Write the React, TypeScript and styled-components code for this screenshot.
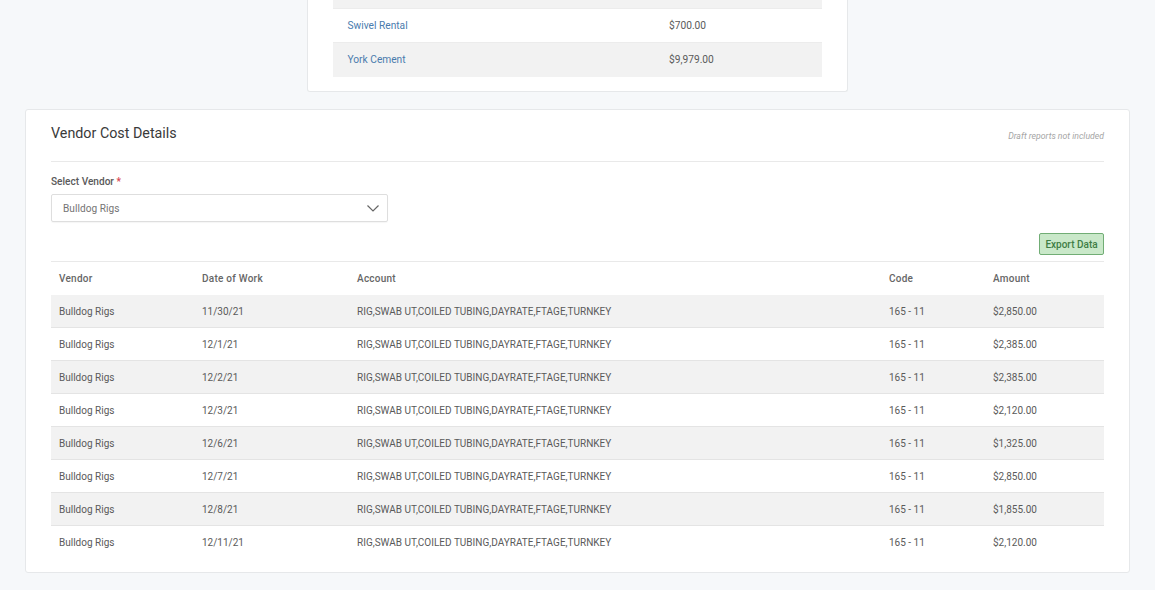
import { createGlobalStyle } from "styled-components";
import styled from "styled-components";

const GlobalStyle = createGlobalStyle`
  html, body {
    margin: 0;
    padding: 0;
    height: 590px;
    overflow: hidden;
    background-color: #f6f8fa;
    font-family: Roboto, "Liberation Sans", sans-serif;
  }
  * { box-sizing: border-box; }
`;

const Page = styled.div`
  width: 1155px;
  height: 590px;
  padding: 0 25px;
  background-color: #f6f8fa;
`;

const SummaryCard = styled.section`
  width: 541px;
  height: 92px;
  margin: 0 0 17px 282px;
  padding: 0 25px 15px;
  background-color: #fff;
  border: 1px solid #e6e8ea;
  border-top: 0;
  border-radius: 0 0 3px 3px;
`;

const SummaryRow = styled.div<{ $shaded?: boolean; $height?: number }>`
  display: grid;
  grid-template-columns: 321.5px 1fr;
  align-items: center;
  height: ${p => p.$height ?? 34}px;
  padding: 0 0 1px 14.5px;
  font-size: 10.2px;
  color: #5a5a5a;
  background-color: ${p => (p.$shaded ? "#f2f2f2" : "#fff")};
  border-bottom: 1px solid #ececec;
  &:last-child { border-bottom: 0; }
`;

const VendorLink = styled.a`
  color: #4a7bad;
  text-decoration: none;
`;

const DetailsCard = styled.section`
  width: 1105px;
  height: 464px;
  padding: 0 25px;
  background-color: #fff;
  border: 1px solid #e6e8ea;
  border-radius: 3px;
`;

const CardHeader = styled.header`
  display: flex;
  justify-content: space-between;
  height: 52px;
  padding-top: 14px;
  border-bottom: 1px solid #e9e9e9;
`;

const Title = styled.h2`
  margin: 0;
  font-size: 14.3px;
  line-height: 18px;
  font-weight: 400;
  color: #3a3a3a;
`;

const DraftNote = styled.em`
  margin-top: 6px;
  font-size: 8.7px;
  line-height: 12px;
  color: #a5a5a5;
`;

const FieldLabel = styled.label`
  display: block;
  margin-top: 13px;
  font-size: 10.1px;
  line-height: 13px;
  font-weight: 500;
  color: #5a5a5a;
`;

const Required = styled.span`
  color: #d9434e;
`;

const SelectBox = styled.div`
  display: flex;
  align-items: center;
  justify-content: space-between;
  width: 337px;
  height: 28px;
  margin-top: 6px;
  padding: 0 7px 0 11px;
  font-size: 10.1px;
  letter-spacing: 0.05px;
  color: #747474;
  border: 1px solid #dedede;
  border-radius: 2px;
  box-shadow: 0 1px 1px rgba(0, 0, 0, 0.04);
`;

const Toolbar = styled.div`
  display: flex;
  justify-content: flex-end;
  margin-top: 11px;
`;

const ExportButton = styled.button`
  width: 65px;
  height: 22px;
  padding: 0;
  font-family: inherit;
  font-size: 10px;
  font-weight: 500;
  color: #3f7d45;
  background-color: #c9e8c9;
  border: 1px solid #71ad75;
  border-radius: 2px;
`;

const Table = styled.table`
  width: 100%;
  margin-top: 6px;
  border-collapse: collapse;
  table-layout: fixed;
  font-size: 10px;
  line-height: 12px;
  color: #5a5a5a;
`;

const HeadCell = styled.th<{ $width: number }>`
  width: ${p => p.$width}px;
  height: 33px;
  padding: 2px 0 0 8px;
  text-align: left;
  font-weight: 500;
  letter-spacing: 0.25px;
  color: #666;
  border-top: 1px solid #e9e9e9;
`;

const BodyRow = styled.tr`
  height: 33px;
  &:nth-child(odd) { background-color: #f2f2f2; }
  &:not(:last-child) td { border-bottom: 1px solid #e4e4e4; }
`;

const BodyCell = styled.td`
  padding: 2px 0 0 8px;
  white-space: nowrap;
`;

const ACCOUNT = "RIG,SWAB UT,COILED TUBING,DAYRATE,FTAGE,TURNKEY";

const rows = [
  { date: "11/30/21", amount: "$2,850.00" },
  { date: "12/1/21", amount: "$2,385.00" },
  { date: "12/2/21", amount: "$2,385.00" },
  { date: "12/3/21", amount: "$2,120.00" },
  { date: "12/6/21", amount: "$1,325.00" },
  { date: "12/7/21", amount: "$2,850.00" },
  { date: "12/8/21", amount: "$1,855.00" },
  { date: "12/11/21", amount: "$2,120.00" },
];

function App() {
  return (
    <Page>
      <GlobalStyle />
      <SummaryCard>
        <SummaryRow $shaded $height={9} />
        <SummaryRow>
          <VendorLink>Swivel Rental</VendorLink>
          <span>$700.00</span>
        </SummaryRow>
        <SummaryRow $shaded>
          <VendorLink>York Cement</VendorLink>
          <span>$9,979.00</span>
        </SummaryRow>
      </SummaryCard>

      <DetailsCard>
        <CardHeader>
          <Title>Vendor Cost Details</Title>
          <DraftNote>Draft reports not included</DraftNote>
        </CardHeader>
        <FieldLabel>
          Select Vendor <Required>*</Required>
        </FieldLabel>
        <SelectBox>
          Bulldog Rigs
          <svg width="14" height="14" viewBox="0 0 14 14" fill="none" stroke="#666" strokeWidth="1.2">
            <path d="M1.5 4.5 7 10l5.5-5.5" />
          </svg>
        </SelectBox>
        <Toolbar>
          <ExportButton>Export Data</ExportButton>
        </Toolbar>
        <Table>
          <thead>
            <tr>
              <HeadCell $width={143}>Vendor</HeadCell>
              <HeadCell $width={155}>Date of Work</HeadCell>
              <HeadCell $width={532}>Account</HeadCell>
              <HeadCell $width={104}>Code</HeadCell>
              <HeadCell $width={119}>Amount</HeadCell>
            </tr>
          </thead>
          <tbody>
            {rows.map(row => (
              <BodyRow key={row.date}>
                <BodyCell>Bulldog Rigs</BodyCell>
                <BodyCell>{row.date}</BodyCell>
                <BodyCell>{ACCOUNT}</BodyCell>
                <BodyCell>165 - 11</BodyCell>
                <BodyCell>{row.amount}</BodyCell>
              </BodyRow>
            ))}
          </tbody>
        </Table>
      </DetailsCard>
    </Page>
  );
}

export default App;
